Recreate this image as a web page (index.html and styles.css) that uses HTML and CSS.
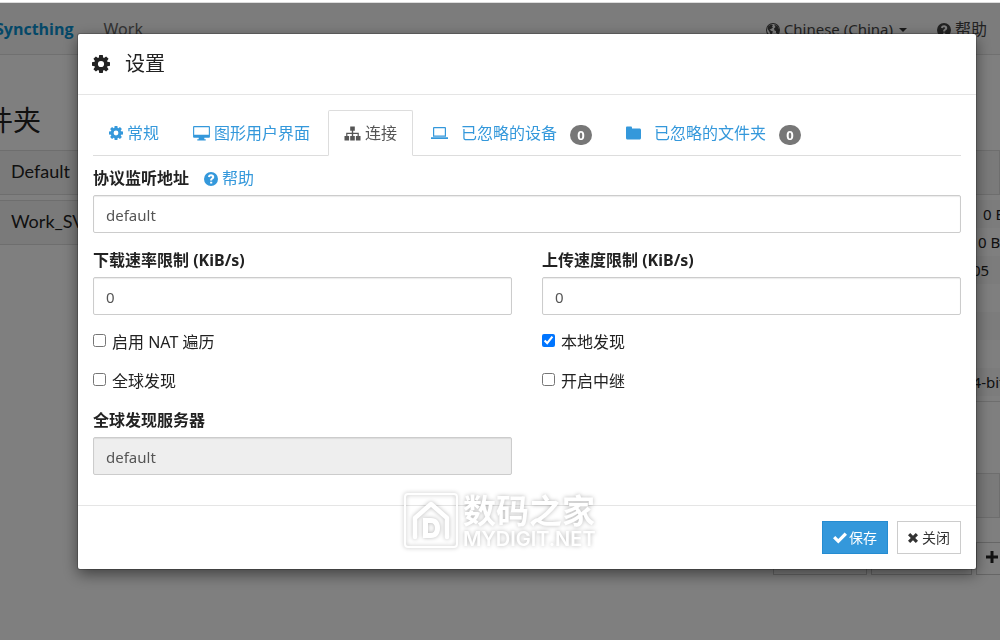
FILE: index.html
```
<!DOCTYPE html>
<html lang="zh-CN">
<head>
<meta charset="utf-8">
<title>Syncthing</title>
<link rel="stylesheet" href="styles.css">
</head>
<body>
<svg class="defs" aria-hidden="true">
  <symbol id="gear" viewBox="0 0 512 512"><path fill-rule="evenodd" d="M205 0h102l10 72 25 11 59-43 70 70-43 59 11 25 73 11v102l-73 11-11 25 43 59-70 70-59-43-25 11-10 72H205l-10-72-25-11-59 43-70-70 43-59-11-25-73-11V205l73-11 11-25-43-59 70-70 59 43 25-11zM256 168a88 88 0 1 0 0 176 88 88 0 0 0 0-176z"/></symbol>
  <symbol id="help" viewBox="0 0 16 16"><path fill-rule="evenodd" d="M8 0a8 8 0 1 0 0 16A8 8 0 0 0 8 0zM7 11h2.400v2.200H7zM4.500 5.400C5 3.600 6.300 2.700 8.100 2.700c2 0 3.600 1.200 3.600 3 0 1.500-.9 2.100-1.700 2.700-.5.400-.7.600-.7 1.300H7c0-1.700.6-2.300 1.400-2.900.6-.4.900-.6.900-1.100 0-.6-.5-.9-1.200-.9-.8 0-1.200.4-1.600 1.300z"/></symbol>
  <symbol id="desktop" viewBox="0 0 18 16"><path fill-rule="evenodd" d="M1 0h16a1 1 0 0 1 1 1v10.500a1 1 0 0 1-1 1h-5V14h1.500v1.500h-9V14H6v-1.500H1a1 1 0 0 1-1-1V1a1 1 0 0 1 1-1zm.2 1.200v8h15.600v-8z"/></symbol>
  <symbol id="sitemap" viewBox="0 0 17 14"><path d="M6.200 0h4.600v4.300H9.200v2h5.600v3.200h1.700V14h-4.600V9.500h1.700V7.500H9.200v2h1.600V14H6.200V9.500h1.600v-2H3.400v2h1.700V14H.5V9.500h1.700V6.300h5.600v-2H6.200z"/></symbol>
  <symbol id="laptop" viewBox="0 0 17 12"><path fill-rule="evenodd" d="M3 0h11a1 1 0 0 1 1 1v8.800H2V1a1 1 0 0 1 1-1zm.2 1.200v7.400h10.600V1.200zM0 10.200h17V12H0z"/></symbol>
  <symbol id="folder" viewBox="0 0 15 13"><path d="M1.200 0h3.600C5.500 0 6 .5 6 1.200V2h7.500C14.400 2 15 2.600 15 3.500v8c0 .9-.6 1.500-1.500 1.500h-12C.6 13 0 12.400 0 11.500V1.200C0 .5.500 0 1.200 0z"/></symbol>
  <symbol id="check" viewBox="0 0 14 11"><path d="M0 5.800 2.300 3.500l3 3L11.600 0 14 2.300 5.300 11z"/></symbol>
  <symbol id="times" viewBox="0 0 10 10"><path d="M0 2.200 2.200 0 5 2.800 7.800 0 10 2.200 7.200 5 10 7.800 7.800 10 5 7.200 2.200 10 0 7.800 2.800 5z"/></symbol>
  <symbol id="plus" viewBox="0 0 12 12"><path d="M4.500 0h3v4.500H12v3H7.500V12h-3V7.500H0v-3h4.500z"/></symbol>
  <symbol id="globe" viewBox="0 0 14 14"><path fill-rule="evenodd" d="M7 0a7 7 0 1 0 0 14A7 7 0 0 0 7 0zm0 1a6 6 0 1 1 0 12A6 6 0 0 1 7 1z"/><path d="M2 3.500 5 1.500 7 2 6 3.500 7 4.500 5 6 3.500 6.500 5.500 8 7 8.500 6 10.500 5 12.500 4 10 3 8 1.500 6zM8 1.500 11.500 3 13 6v3l-1.500 2-1.500-1V8L8.500 7.500 8 5.500 9.500 4z"/></symbol>
  <symbol id="house" viewBox="0 0 56 58"><rect x="2" y="2" width="52" height="53" rx="3" fill="none" stroke="currentColor" stroke-width="2"/><path fill="none" stroke="currentColor" stroke-width="4.500" stroke-linecap="round" stroke-linejoin="round" d="M12 45V26L28 12l16 14v19"/><path fill-rule="evenodd" d="M20 26h8c6 0 9 4 9 10s-3 10-9 10h-8zm5 5v10h3c2.500 0 4-2 4-5s-1.500-5-4-5z"/></symbol>
</svg>

<div class="app">
  <nav class="navbar">
    <a class="brand" href="#">Syncthing</a>
    <span class="device">Work</span>
    <a class="nav-item language" href="#"><svg class="i14"><use href="#globe"/></svg>Chinese (China)<span class="caret"></span></a>
    <a class="nav-item" href="#"><svg class="i14"><use href="#help"/></svg><span class="nav-help">帮助</span></a>
  </nav>
  <main class="columns">
    <section class="folders">
      <h3>文件夹</h3>
      <div class="panel-heading">Default</div>
      <div class="panel-heading">Work_SVN</div>
    </section>
    <section class="devices">
      <h3>&nbsp;</h3>
      <div class="panel">
        <div class="panel-heading">&nbsp;</div>
        <ul class="stats">
          <li class="rate">0 B/s</li>
          <li class="total">0 B/s</li>
          <li>05</li>
          <li></li>
          <li></li>
          <li></li>
          <li>64-bit</li>
        </ul>
      </div>
      <div class="panel-heading remote">&nbsp;</div>
      <div class="actions">
        <button type="button" class="action pause" aria-label="暂停"></button>
        <button type="button" class="action" aria-label="更改"></button>
        <button type="button" class="action" aria-label="添加"><svg class="i12"><use href="#plus"/></svg></button>
      </div>
    </section>
  </main>
</div>

<div class="backdrop">
  <div class="dialog" role="dialog" aria-labelledby="title">
    <header class="dialog-header">
      <svg class="i18"><use href="#gear"/></svg>
      <h4 id="title">设置</h4>
    </header>
    <form class="dialog-body">
      <nav class="tabs">
        <a class="tab" href="#"><svg class="i14"><use href="#gear"/></svg>常规</a>
        <a class="tab" href="#"><svg class="i17"><use href="#desktop"/></svg>图形用户界面</a>
        <a class="tab active" href="#"><svg class="i17"><use href="#sitemap"/></svg>连接</a>
        <a class="tab wide" href="#"><svg class="i17 short"><use href="#laptop"/></svg>已忽略的设备<span class="badge">0</span></a>
        <a class="tab wide" href="#"><svg class="i15"><use href="#folder"/></svg>已忽略的文件夹<span class="badge">0</span></a>
      </nav>
      <div class="fields">
        <div class="field full">
          <div class="label-row">
            <label for="listen">协议监听地址</label>
            <a class="help" href="#"><svg class="i14"><use href="#help"/></svg>帮助</a>
          </div>
          <input class="control" id="listen" type="text" value="default">
        </div>
        <div class="field">
          <label for="down">下载速率限制 (KiB/s)</label>
          <input class="control" id="down" type="text" value="0">
        </div>
        <div class="field">
          <label for="up">上传速度限制 (KiB/s)</label>
          <input class="control" id="up" type="text" value="0">
        </div>
        <label class="check"><input type="checkbox">启用 NAT 遍历</label>
        <label class="check"><input type="checkbox" checked>本地发现</label>
        <label class="check"><input type="checkbox">全球发现</label>
        <label class="check"><input type="checkbox">开启中继</label>
        <div class="field">
          <label for="servers">全球发现服务器</label>
          <input class="control" id="servers" type="text" value="default" disabled>
        </div>
      </div>
    </form>
    <footer class="dialog-footer">
      <button type="button" class="btn primary"><svg class="i14"><use href="#check"/></svg>保存</button>
      <button type="button" class="btn"><svg class="i10"><use href="#times"/></svg>关闭</button>
    </footer>
    <div class="watermark">
      <svg class="mark"><use href="#house"/></svg>
      <div class="mark-text"><span class="mark-name">数码之家</span><span class="mark-site">MYDIGIT.NET</span></div>
    </div>
  </div>
</div>
</body>
</html>
```
FILE: styles.css
```
* { box-sizing: border-box; }
body {
  margin: 0;
  min-height: 100vh;
  overflow: hidden;
  border-top: 2px solid #fff;
  background: #fff;
  color: #222;
  font: 16px/23px "Noto Sans", "Noto Sans CJK SC", sans-serif;
}
a { color: #3498db; text-decoration: none; }
svg { flex: none; fill: currentColor; }
h3, h4 { margin: 0; font-weight: 400; }
.defs { position: absolute; width: 0; height: 0; }
.i10 { width: 10px; height: 10px; }
.i12 { width: 12px; height: 12px; }
.i14 { width: 14px; height: 14px; }
.i15 { width: 15px; height: 14px; }
.i17 { width: 17px; height: 15px; }
.i17.short { height: 12px; }
.i18 { width: 18px; height: 18px; }

/* Main page behind the dialog */
.app { border-top: 1px solid #ddd; overflow: hidden; }
.navbar {
  display: flex;
  align-items: center;
  height: 52px;
  margin-left: -5px;
  padding: 2px 13px 0 0;
  background: #f8f8f8;
  border-bottom: 1px solid #e0e0e0;
}
.brand { color: #0891d1; font-family: "Open Sans", sans-serif; font-weight: 700; }
.device { margin-left: 30px; color: #666; }
.nav-item { display: flex; align-items: center; gap: 4px; color: #444; font-size: 15px; }
.nav-help { font-size: 16px; }
.language { margin: 0 30px 0 auto; }
.caret {
  margin-left: 2px;
  border: 4px solid transparent;
  border-top-color: #333;
  border-bottom: 0;
}
.columns { display: flex; justify-content: space-between; }
.folders { width: 48%; margin-left: -44px; }
.folders h3 { padding-left: 1px; }
.folders .panel-heading { padding-left: 54px; margin-bottom: 5px; }
.devices { width: 227px; }
h3 { padding-top: 56px; margin-bottom: 21px; font-size: 28px; line-height: 18px; }
.panel-heading {
  height: 45px;
  border: 1px solid #ddd;
  background: #f5f5f5;
  font: 18px/40px Lato, "Open Sans", sans-serif;
}
.panel { border-bottom: 1px solid #ddd; }
.stats { margin: 0; padding: 5px 0; list-style: none; line-height: 28px; font-size: 15px; }
.stats li { height: 28px; padding-left: 199px; white-space: nowrap; overflow: hidden; }
.stats li:nth-child(odd) { background: #f9f9f9; }
.stats .rate { padding-left: 210px; }
.stats .total { padding-left: 205px; }
.stats li:last-child { padding-left: 191px; }
.remote { margin-top: 71px; }
.actions { display: flex; gap: 4px; margin-top: 24px; }
.action {
  flex: none;
  width: 101px;
  height: 33px;
  padding: 0 9px;
  border: 1px solid #ccc;
  background: #fff;
  color: #222;
  text-align: left;
}
.action.pause { width: 94px; }

/* Settings dialog */
.backdrop {
  position: fixed;
  inset: 3px 0 0;
  padding: 31px 24px 0 78px;
  background: rgba(0, 0, 0, .5);
}
.dialog {
  position: relative;
  background: #fff;
  border-radius: 2px;
  box-shadow: 0 0 0 1px rgba(0, 0, 0, .2), 0 5px 15px rgba(0, 0, 0, .5);
}
.dialog-header {
  display: flex;
  align-items: center;
  gap: 15px;
  padding: 15px 14px;
  border-bottom: 1px solid #e5e5e5;
}
.dialog-header h4 { font-size: 20px; line-height: 30px; }
.dialog-body { padding: 15px 15px 30px; }
.tabs { display: flex; border-bottom: 1px solid #ddd; gap: 2px; }
.tab {
  display: flex;
  align-items: center;
  gap: 4px;
  height: 46px;
  margin-bottom: -1px;
  padding: 0 15px;
  border: 1px solid transparent;
  white-space: nowrap;
}
.tab.active { border-color: #ddd #ddd #fff; border-radius: 2px 2px 0 0; background: #fff; color: #555; }
.tab.wide { gap: 13px; }
.badge {
  min-width: 22px;
  margin-top: 3px;
  border-radius: 10px;
  background: #777;
  color: #fff;
  font-size: 13px;
  font-weight: 700;
  line-height: 20px;
  text-align: center;
}
.fields { display: grid; grid-template-columns: 1fr 1fr; gap: 16px 30px; padding-top: 11px; }
.full { grid-column: 1 / -1; }
.field label { display: block; font-weight: 700; }
.label-row { display: flex; gap: 15px; }
.help { display: flex; align-items: center; gap: 4px; }
.control {
  display: block;
  width: 100%;
  height: 38px;
  margin-top: 5px;
  padding: 2px 12px 0;
  border: 1px solid #ccc;
  border-radius: 2px;
  background: #fff;
  box-shadow: inset 0 1px 1px rgba(0, 0, 0, .08);
  color: #555;
  font: 15px/23px "Noto Sans", sans-serif;
}
.control:disabled { background: #eee; }
.check { display: flex; align-items: center; gap: 6px; }
.check input { width: 13px; height: 13px; margin: 0 0 4px; }
.dialog-footer {
  display: flex;
  justify-content: flex-end;
  gap: 9px;
  padding: 15px;
  border-top: 1px solid #e5e5e5;
}
.btn {
  display: flex;
  align-items: center;
  gap: 2px;
  height: 33px;
  padding: 0 10px;
  border: 1px solid #ccc;
  background: #fff;
  color: #333;
  font: 14px/20px "Noto Sans", "Noto Sans CJK SC", sans-serif;
}
.btn .i10 { margin-right: 2px; }
.btn.primary { border-color: #258cd1; background: #3498db; color: #fff; }

/* Site mark over the dialog */
.watermark {
  position: absolute;
  left: 325px;
  bottom: 19px;
  display: flex;
  gap: 4px;
  color: #fff;
  filter: drop-shadow(0 0 2px rgba(0, 0, 0, .28));
  pointer-events: none;
}
.mark { width: 56px; height: 58px; }
.mark-text { display: flex; flex-direction: column; gap: 2px; }
.mark-name { font: 700 33px/34px "Noto Sans CJK SC", sans-serif; }
.mark-site { font: 600 20px/22px Inter, sans-serif; }
```
